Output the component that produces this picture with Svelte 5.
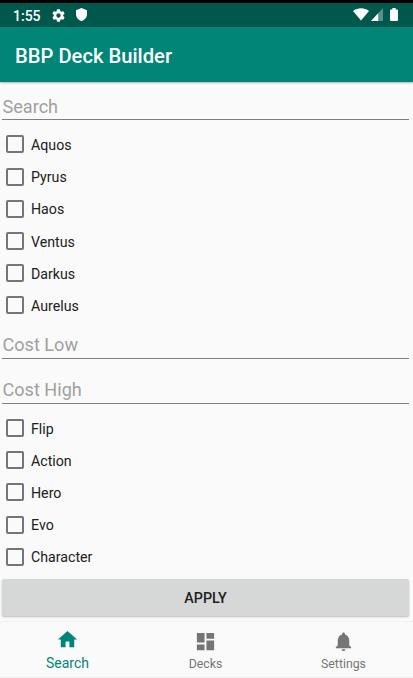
<script>
  const elements = ['Aquos', 'Pyrus', 'Haos', 'Ventus', 'Darkus', 'Aurelus'];
  const types = ['Flip', 'Action', 'Hero', 'Evo', 'Character'];
  const tabs = [
    { name: 'Search', icon: 'M10 20v-6h4v6h5v-8h3L12 3 2 12h3v8z' },
    { name: 'Decks', icon: 'M3 13h8V3H3v10zm0 8h8v-6H3v6zm10 0h8V11h-8v10zm0-18v6h8V3h-8z' },
    { name: 'Settings', icon: 'M12 22c1.1 0 2-.9 2-2h-4c0 1.1.89 2 2 2zm6-6v-5c0-3.07-1.64-5.64-4.5-6.32V4c0-.83-.67-1.5-1.5-1.5s-1.5.67-1.5 1.5v.68C7.63 5.36 6 7.92 6 11v5l-2 2v1h16v-1l-2-2z' }
  ];
</script>

{#snippet field(label)}
  <label class="field"><input placeholder={label} aria-label={label} /></label>
{/snippet}

{#snippet checks(items)}
  <div class="checks">
    {#each items as item}
      <label class="check"><input type="checkbox" /><span>{item}</span></label>
    {/each}
  </div>
{/snippet}

<div class="screen">
  <div class="status">
    <span class="time">1:55</span>
    <svg class="gear" width="15" height="15" viewBox="0 0 24 24"><path d="M19.43 12.98c.04-.32.07-.64.07-.98s-.03-.66-.07-.98l2.11-1.65c.19-.15.24-.42.12-.64l-2-3.46c-.12-.22-.39-.3-.61-.22l-2.49 1c-.52-.4-1.08-.73-1.69-.98l-.38-2.65C14.46 2.18 14.25 2 14 2h-4c-.25 0-.46.18-.49.42l-.38 2.65c-.61.25-1.17.59-1.69.98l-2.49-1c-.23-.09-.49 0-.61.22l-2 3.46c-.13.22-.07.49.12.64l2.11 1.65c-.04.32-.07.65-.07.98s.03.66.07.98l-2.11 1.65c-.19.15-.24.42-.12.64l2 3.46c.12.22.39.3.61.22l2.49-1c.52.4 1.08.73 1.69.98l.38 2.65c.03.24.24.42.49.42h4c.25 0 .46-.18.49-.42l.38-2.65c.61-.25 1.17-.59 1.69-.98l2.49 1c.23.09.49 0 .61-.22l2-3.46c.12-.22.07-.49-.12-.64l-2.11-1.65zM12 15.5c-1.93 0-3.500-1.570-3.500-3.500s1.570-3.500 3.500-3.500 3.500 1.570 3.500 3.500-1.570 3.500-3.500 3.500z" /></svg>
    <svg class="shield" width="11" height="13" viewBox="0 0 11 13"><path d="M5.500 0L0 2.200v3.700C0 9.200 2.300 12.100 5.500 13 8.700 12.100 11 9.200 11 5.900V2.200z" /></svg>
    <svg class="wifi" width="16" height="13" viewBox="0 0 16 13"><path d="M0 3C4.500-.6 11.500-.6 16 3L8 12.600z" /></svg>
    <svg class="signal" width="12" height="13" viewBox="0 0 12 13"><path d="M12 0v13H0z" opacity=".35" /><path d="M7.200 5.200V13H0z" /></svg>
    <svg class="battery" width="8" height="13" viewBox="0 0 8 13"><path d="M2.300 0h3.400v1.400H7q1 0 1 1V12q0 1-1 1H1q-1 0-1-1V2.400q0-1 1-1h1.300z" /></svg>
  </div>
  <header><h1>BBP Deck Builder</h1></header>
  <main>
    {@render field('Search')}
    {@render checks(elements)}
    {@render field('Cost Low')}
    {@render field('Cost High')}
    {@render checks(types)}
    <button class="apply">APPLY</button>
  </main>
  <nav>
    {#each tabs as tab, i}
      <button class="tab" class:active={i === 0}>
        <svg width="23" height="23" viewBox="0 0 24 24"><path d={tab.icon} /></svg>
        <span>{tab.name}</span>
      </button>
    {/each}
  </nav>
</div>

<style>
  .screen {
    width: 413px;
    height: 678px;
    box-sizing: border-box;
    display: flex;
    flex-direction: column;
    overflow: hidden;
    border-top: 3px solid #000;
    background: #fafafa;
    font-family: Roboto, sans-serif;
    color: #202020;
  }
  .status {
    height: 24px;
    flex: none;
    display: flex;
    align-items: center;
    box-sizing: border-box;
    padding: 0 15px 0 13px;
    background: #00574b;
    color: #fff;
  }
  .status svg { fill: #fff; flex: none; }
  .time { width: 38px; padding-top: 2px; font-size: 14px; font-weight: 500; line-height: 22px; }
  .shield { margin-left: 10px; }
  .status .shield { margin-bottom: 1px; }
  .wifi { margin-left: auto; }
  .status .wifi, .status .signal, .status .battery { margin-bottom: 2px; }
  .signal { margin-left: 2px; }
  .battery { margin-left: 7px; }
  header {
    height: 55px;
    flex: none;
    display: flex;
    align-items: center;
    padding-left: 15px;
    background: #008577;
    box-shadow: 0 1px 2px rgba(0, 0, 0, .3);
  }
  h1 { margin: 2px 0 0; font-size: 20.2px; font-weight: 500; line-height: 24px; color: #fff; }
  main { padding: 1px 4px 0 2px; flex: none; }
  .field { display: block; height: 45px; padding-top: 10px; box-sizing: border-box; }
  .field input {
    display: block;
    width: 100%;
    height: 27px;
    box-sizing: border-box;
    padding: 0 0 0 .5px;
    border: 0;
    border-bottom: 1px solid #808080;
    background: none;
    outline: none;
    font: 18.1px/26px Roboto, sans-serif;
  }
  .field input::placeholder { color: #a0a0a0; opacity: 1; }
  .checks { padding-top: .4px; }
  .check { display: flex; align-items: center; height: 32.2px; padding-left: 4px; font-size: 14.200px; }
  .check span { padding-top: 1px; }
  .check input {
    appearance: none;
    width: 18px;
    height: 18px;
    margin: 0 7px 0 0;
    border: 2px solid #757575;
    border-radius: 2px;
  }
  .apply {
    display: block;
    width: 100%;
    height: 37px;
    margin-top: 6px;
    padding: 1px 0 0;
    border: 0;
    border-radius: 2px;
    background: #d6d7d7;
    box-shadow: 0 1px 2px rgba(0, 0, 0, .25);
    color: #202020;
    font: 500 14.300px Roboto, sans-serif;
  }
  nav {
    display: flex;
    justify-content: center;
    height: 57px;
    flex: none;
    margin-top: auto;
    box-sizing: border-box;
    padding-right: 2px;
    border-top: 1px solid #f0f0f0;
    border-bottom: 1px solid #eee;
  }
  .tab {
    flex: none;
    width: 138px;
    display: flex;
    flex-direction: column;
    align-items: center;
    justify-content: flex-start;
    padding: 8px 0 0;
    border: 0;
    background: none;
    color: #757575;
    font: 12.300px/16px Roboto, sans-serif;
  }
  .tab svg { fill: currentColor; margin-bottom: 3px; }
  .tab.active { color: #008577; font-size: 14px; padding-top: 6px; }
  .tab.active svg { margin-bottom: 4px; }
</style>
